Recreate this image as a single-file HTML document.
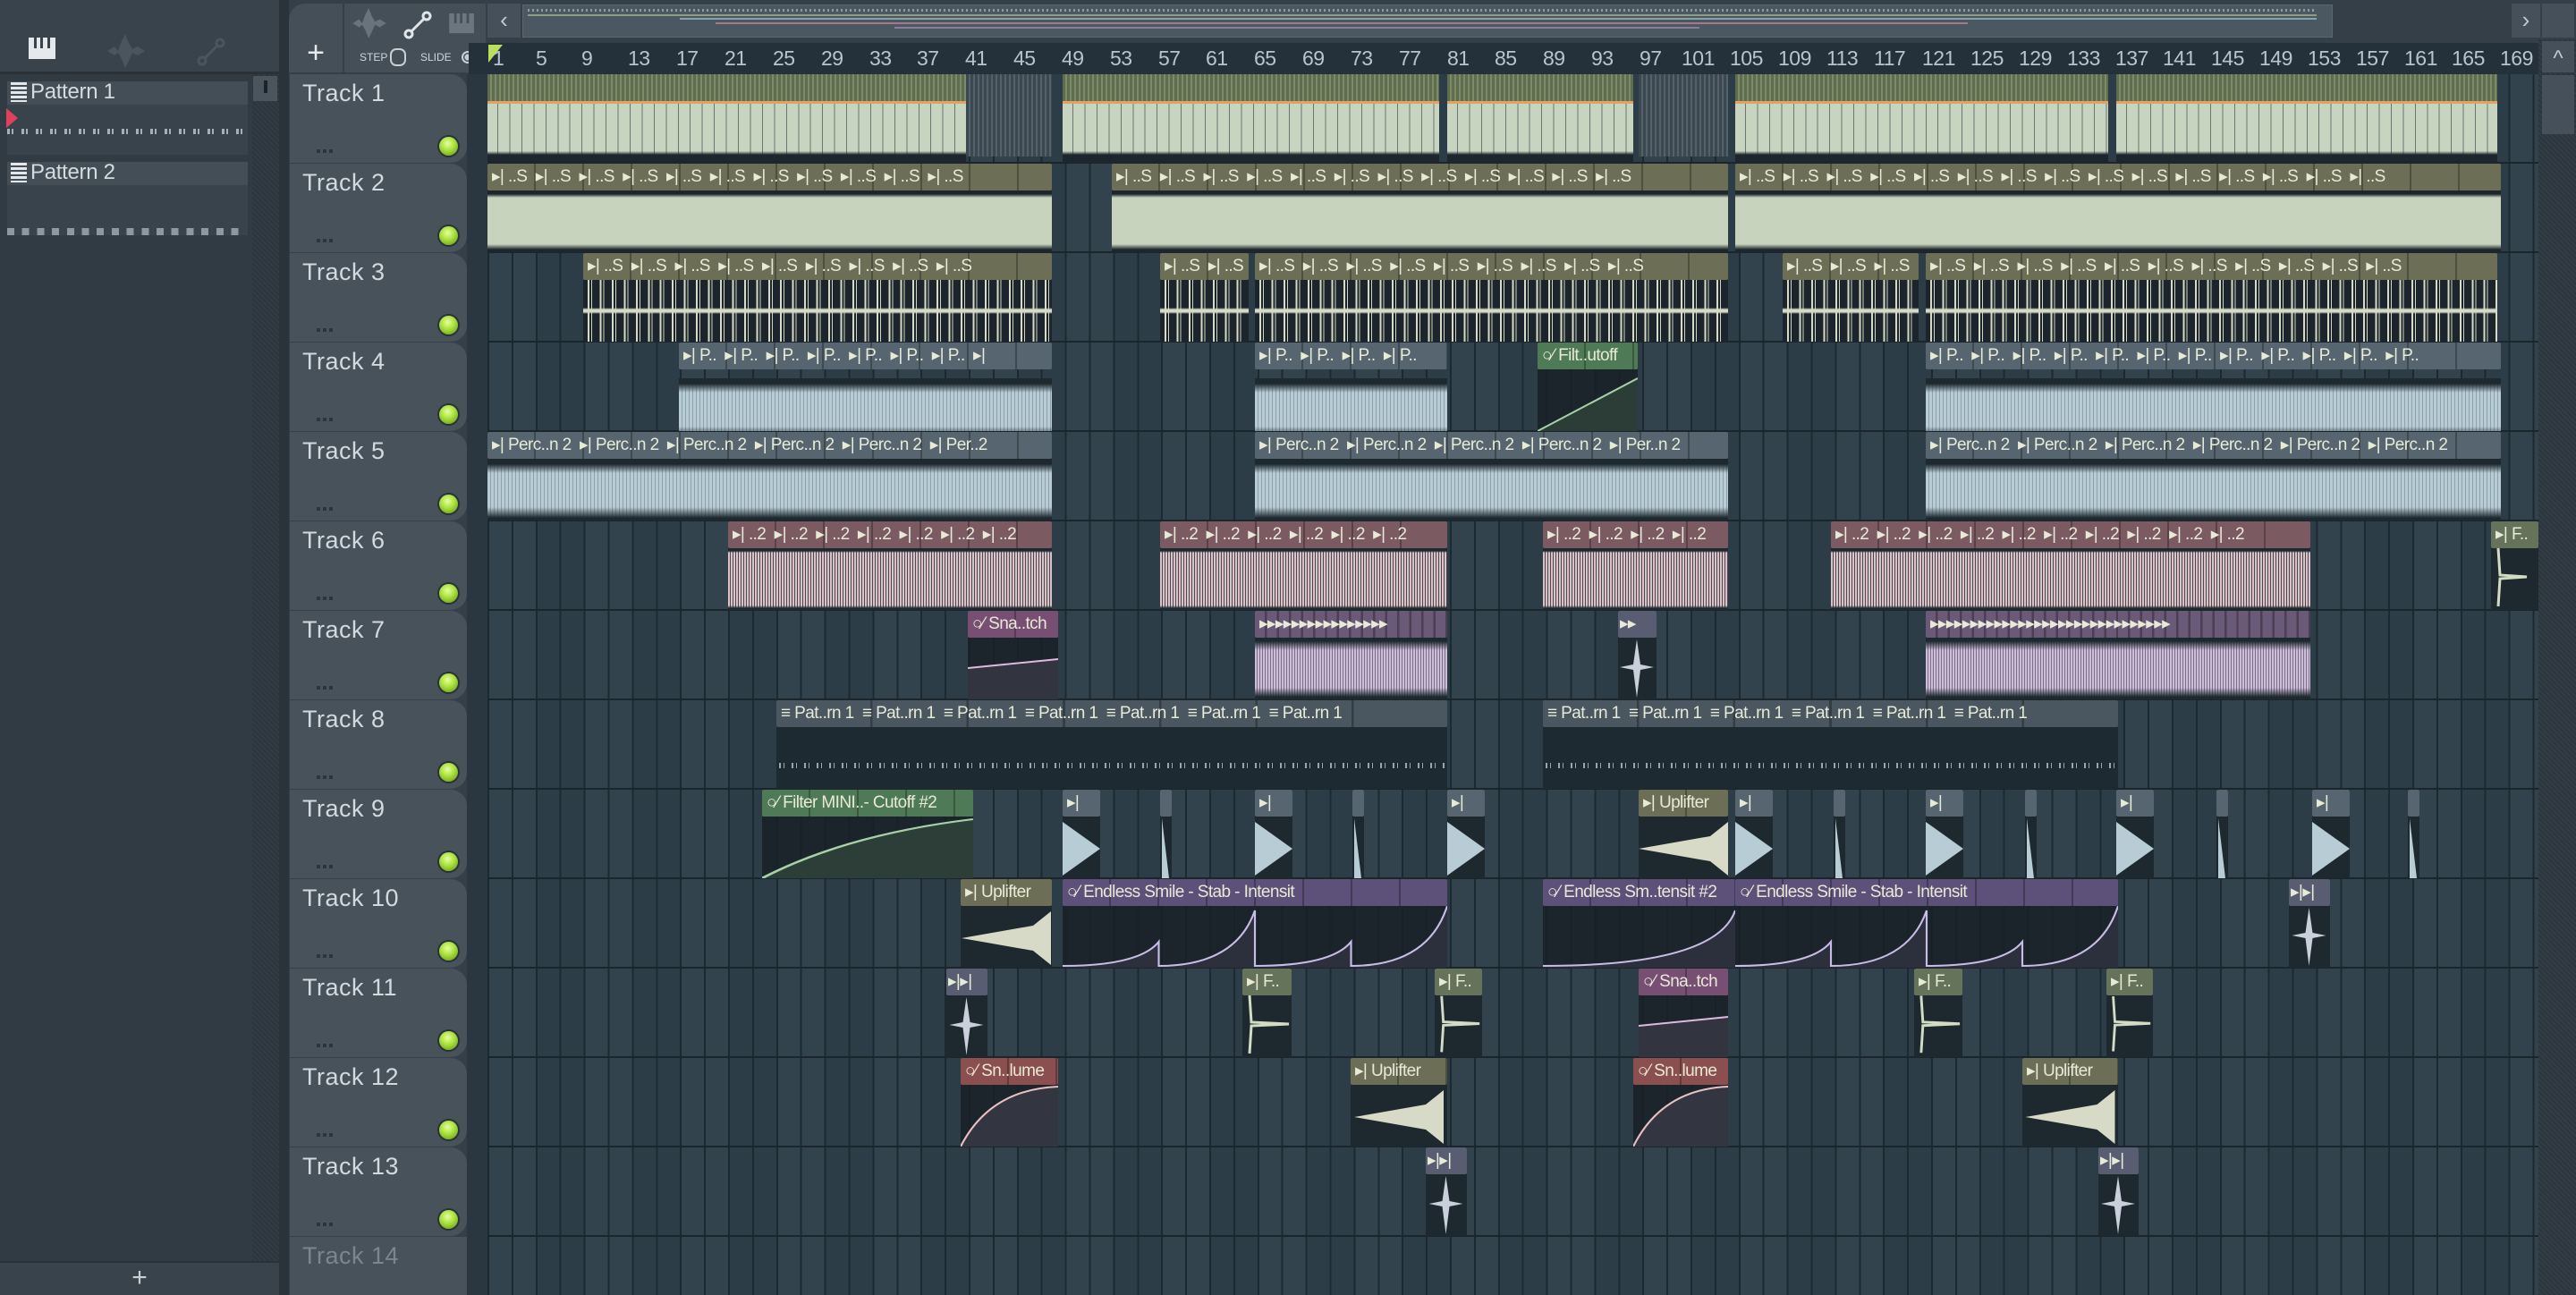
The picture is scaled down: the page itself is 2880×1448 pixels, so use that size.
<!DOCTYPE html>
<html><head><meta charset="utf-8"><style>
*{box-sizing:border-box;margin:0;padding:0}
body{width:2880px;height:1448px;overflow:hidden;background:#343f48;font-family:"Liberation Sans Narrow","Liberation Sans",sans-serif;position:relative}
.a{position:absolute}
#grid{left:545px;top:83px;width:2293px;height:1365px;
background:
repeating-linear-gradient(180deg,transparent 0 98px,#1b252c 98px 100px),
repeating-linear-gradient(90deg,#1d2930 0 2px,transparent 2px 26.9px),
repeating-linear-gradient(90deg,#33434e 0 53.8px,#2d3d48 53.8px 107.6px);}
.hd{position:absolute;left:324px;width:198px;height:99px;background:#47525b;border-radius:0 18px 18px 0;}
.hd b{position:absolute;left:14px;top:6px;font-weight:normal;font-size:27px;color:#d3dadf;letter-spacing:0.5px}
.hd i{position:absolute;left:167px;top:70px;width:21px;height:21px;border-radius:50%;background:radial-gradient(circle at 45% 35%,#e6ff9a 0,#a6e03a 45%,#5c8a1a 100%);box-shadow:0 0 0 2px #2a3236}
.hd u{position:absolute;left:30px;top:84px;width:20px;height:4px;text-decoration:none;background:repeating-linear-gradient(90deg,#2c353c 0 4px,transparent 4px 7px)}
.c{position:absolute;height:99px;overflow:hidden}
.c .h{height:30px;color:#e8ead8;font-size:19px;letter-spacing:-0.6px;line-height:30px;padding-left:5px;white-space:nowrap;overflow:hidden;border-radius:2px;
background-image:repeating-linear-gradient(90deg,transparent 0 52px,rgba(0,0,0,.28) 52px 54px)}
.c .bd{position:absolute;top:30px;left:0;right:0;bottom:0}
.o .h{background-color:#6c6f56}.s .h{background-color:#56656f}.g .h{background-color:#4f7a56}.p .h{background-color:#7b5b61}
.m .h{background-color:#774f72}.v .h{background-color:#5d5079}.u .h{background-color:#6a5a77}.r .h{background-color:#8a4f4e}
.t .h{background-color:#4a5760}.n .h{background-color:#595d72}
.wl{background:linear-gradient(180deg,#1c262c 0 4px,#c8d3bd 8px 60px,#1c262c 66px)}
.ws{background:linear-gradient(180deg,transparent 0 45%,#d6dac6 48% 52%,transparent 55%),repeating-linear-gradient(90deg,transparent 0 5px,#d6dac6 5px 7px,transparent 7px 9px,#cfd3bf 9px 10px,transparent 10px 13.45px),#1b252b}
.wn{background:linear-gradient(180deg,#1e292f 0 6px,rgba(30,41,47,0) 16px 54px,#1e292f 66px),repeating-linear-gradient(90deg,#b8ccd5 0 3px,#8ea2ac 3px 4px),#b8ccd5}
.wp{background:linear-gradient(180deg,#1e292f 0 3px,rgba(30,41,47,0) 5px 64px,#1e292f 67px),repeating-linear-gradient(90deg,#dcc2c7 0 2px,#4a4a52 2px 3px),#dcc2c7}
.wv{background:linear-gradient(180deg,#1e292f 0 4px,rgba(30,41,47,0) 14px 56px,#1e292f 66px),repeating-linear-gradient(90deg,#cdbdd8 0 2px,#7d708a 2px 3px),#cdbdd8}
.wa{background:rgba(24,32,38,.85)}
.wt{background:repeating-linear-gradient(90deg,transparent 0 3px,#9aa6ad 3px 5px,transparent 5px 8px,#9aa6ad 8px 9px,transparent 9px 14px) 0 40px/100% 6px no-repeat,#1e2a31}
.t1{position:absolute;left:0;right:0;top:0;height:99px;background:linear-gradient(180deg,transparent 0 30px,#e7a05e 30px 33px,#c6d4c0 33px 86px,#1c262c 90px),repeating-linear-gradient(90deg,#5e6c50 0 3px,#7d8c67 3px 5px);}
.t1:after{content:"";position:absolute;left:0;right:0;top:33px;height:57px;background:repeating-linear-gradient(90deg,transparent 0 11px,rgba(30,40,45,.55) 11px 12px,transparent 12px 13.45px)}
.dk{background:repeating-linear-gradient(90deg,#3c4850 0 3px,#55616a 3px 5px)}
svg{position:absolute;left:0;top:0;width:100%;height:100%}
.num{position:absolute;top:52px;font-size:23px;color:#b9c4cb;letter-spacing:-0.5px}
</style></head><body>

<div class="a" style="left:0;top:0;width:320px;height:83px;background:#39434c;border-bottom:3px solid #2a3238"></div>
<svg class="a" style="left:32px;top:42px;width:32px;height:26px" viewBox="0 0 32 26"><rect x="0" y="0" width="30" height="24" fill="#e6e9eb"/><rect x="6" y="0" width="3" height="12" fill="#39434c"/><rect x="13" y="0" width="3" height="12" fill="#39434c"/><rect x="21" y="0" width="3" height="12" fill="#39434c"/></svg>
<svg class="a" style="left:120px;top:38px;width:42px;height:38px" viewBox="0 0 42 38"><path d="M0 19 L8 14 L12 19 L16 8 L20 0 L24 10 L28 17 L34 14 L42 19 L34 24 L28 21 L24 30 L20 38 L16 28 L12 21 L8 24Z" fill="#4a555e"/></svg>
<svg class="a" style="left:220px;top:42px;width:32px;height:32px" viewBox="0 0 32 32"><circle cx="6" cy="26" r="4" fill="none" stroke="#4a555e" stroke-width="3"/><circle cx="26" cy="6" r="4" fill="none" stroke="#4a555e" stroke-width="3"/><line x1="9" y1="23" x2="23" y2="9" stroke="#4a555e" stroke-width="3"/></svg>
<div class="a" style="left:0;top:83px;width:282px;height:1327px;background:#313b44"></div>
<div class="a" style="left:8px;top:91px;width:269px;height:26px;background:#434e57"></div>
<div class="a" style="left:12px;top:92px;width:18px;height:22px;background:repeating-linear-gradient(180deg,#e4e8ea 0 3px,#434e57 3px 5px)"></div>
<div class="a" style="left:34px;top:89px;font-size:24px;color:#d5dce0;letter-spacing:-0.3px">Pattern 1</div>
<div class="a" style="left:8px;top:117px;width:269px;height:56px;background:#38434c"></div>
<div class="a" style="left:7px;top:121px;width:0;height:0;border-top:11px solid transparent;border-bottom:11px solid transparent;border-left:13px solid #e0405a"></div>
<div class="a" style="left:8px;top:144px;width:269px;height:6px;background:repeating-linear-gradient(90deg,#a7b0b6 0 3px,transparent 3px 5px,#a7b0b6 5px 7px,transparent 7px 16px)"></div>
<div class="a" style="left:8px;top:181px;width:269px;height:26px;background:#434e57"></div>
<div class="a" style="left:12px;top:182px;width:18px;height:22px;background:repeating-linear-gradient(180deg,#e4e8ea 0 3px,#434e57 3px 5px)"></div>
<div class="a" style="left:34px;top:179px;font-size:24px;color:#d5dce0;letter-spacing:-0.3px">Pattern 2</div>
<div class="a" style="left:8px;top:207px;width:269px;height:56px;background:#38434c"></div>
<div class="a" style="left:8px;top:255px;width:262px;height:8px;background:repeating-linear-gradient(90deg,#8e989f 0 8px,transparent 8px 16.7px)"></div>
<div class="a" style="left:282px;top:83px;width:30px;height:1327px;background:repeating-linear-gradient(45deg,#2c353d 0 2px,#323c44 2px 4px)"></div>
<div class="a" style="left:283px;top:85px;width:27px;height:28px;background:#4a555e"></div>
<div class="a" style="left:295px;top:90px;width:4px;height:14px;background:#1c2328"></div>
<div class="a" style="left:312px;top:0;width:11px;height:1448px;background:#2a3339"></div>
<div class="a" style="left:0;top:1410px;width:312px;height:38px;background:#39434c;border-top:2px solid #2a3238;color:#c9d0d4;font-size:30px;text-align:center;line-height:34px">+</div>

<div class="a" style="left:323px;top:0;width:2557px;height:48px;background:#353f48"></div>
<div class="a" style="left:323px;top:4px;width:60px;height:77px;background:#454f58;border-radius:18px 0 0 0;color:#e6eaec;font-size:34px;text-align:center;line-height:110px">+</div>
<div class="a" style="left:385px;top:4px;width:158px;height:77px;background:#454f58"></div>
<svg class="a" style="left:393px;top:9px;width:40px;height:34px" viewBox="0 0 42 38"><path d="M0 19 L8 14 L12 19 L16 8 L20 0 L24 10 L28 17 L34 14 L42 19 L34 24 L28 21 L24 30 L20 38 L16 28 L12 21 L8 24Z" fill="#68737b"/></svg>
<svg class="a" style="left:451px;top:12px;width:32px;height:32px" viewBox="0 0 32 32"><circle cx="6" cy="26" r="4" fill="none" stroke="#e0e5e8" stroke-width="3"/><circle cx="26" cy="6" r="4" fill="none" stroke="#e0e5e8" stroke-width="3"/><line x1="9" y1="23" x2="23" y2="9" stroke="#e0e5e8" stroke-width="3"/></svg>
<svg class="a" style="left:502px;top:15px;width:30px;height:24px" viewBox="0 0 32 26"><rect x="0" y="0" width="30" height="24" fill="#6b767e"/><rect x="6" y="0" width="3" height="12" fill="#454f58"/><rect x="13" y="0" width="3" height="12" fill="#454f58"/><rect x="21" y="0" width="3" height="12" fill="#454f58"/></svg>
<div class="a" style="left:402px;top:57px;font-size:12px;color:#d0d6da">STEP</div>
<div class="a" style="left:436px;top:54px;width:18px;height:20px;border:2px solid #c8ced2;border-radius:7px"></div>
<div class="a" style="left:470px;top:57px;font-size:12px;color:#d0d6da">SLIDE</div>
<div class="a" style="left:516px;top:57px;width:14px;height:14px;border:2px solid #c8ced2;border-radius:50%;background:radial-gradient(circle,#c8ced2 0 3px,transparent 4px)"></div>
<div class="a" style="left:545px;top:4px;width:37px;height:38px;background:#46505a;color:#c3cace;font-size:26px;text-align:center;line-height:36px">&#8249;</div>
<div class="a" style="left:584px;top:5px;width:2024px;height:37px;background:#4b5861;border:1px solid #5a666f"></div>
<div class="a" style="left:590px;top:10px;width:2000px;height:3px;background:repeating-linear-gradient(90deg,#8f9aa0 0 2px,transparent 2px 5px)"></div>
<div class="a" style="left:590px;top:16px;width:2000px;height:2px;background:#8d9c82"></div>
<div class="a" style="left:760px;top:20px;width:1830px;height:2px;background:#89a3ad"></div>
<div class="a" style="left:800px;top:25px;width:1400px;height:2px;background:#a57a86"></div>
<div class="a" style="left:1000px;top:30px;width:900px;height:2px;background:#8a7aa0"></div>
<div class="a" style="left:2808px;top:4px;width:32px;height:38px;background:#46505a;color:#c3cace;font-size:26px;text-align:center;line-height:36px">&#8250;</div>
<div class="a" style="left:2842px;top:4px;width:36px;height:38px;background:#46505a"></div>

<div class="a" style="left:524px;top:48px;width:2314px;height:35px;background:#24313a"></div>
<div class="a" style="left:546px;top:50px;width:0;height:0;border-left:16px solid #b8e05a;border-bottom:20px solid transparent"></div>
<div class="num" style="left:551px">1</div><div class="num" style="left:599px">5</div><div class="num" style="left:650px">9</div><div class="num" style="left:702px">13</div><div class="num" style="left:756px">17</div><div class="num" style="left:810px">21</div><div class="num" style="left:864px">25</div><div class="num" style="left:918px">29</div><div class="num" style="left:972px">33</div><div class="num" style="left:1025px">37</div><div class="num" style="left:1079px">41</div><div class="num" style="left:1133px">45</div><div class="num" style="left:1187px">49</div><div class="num" style="left:1241px">53</div><div class="num" style="left:1295px">57</div><div class="num" style="left:1348px">61</div><div class="num" style="left:1402px">65</div><div class="num" style="left:1456px">69</div><div class="num" style="left:1510px">73</div><div class="num" style="left:1564px">77</div><div class="num" style="left:1618px">81</div><div class="num" style="left:1671px">85</div><div class="num" style="left:1725px">89</div><div class="num" style="left:1779px">93</div><div class="num" style="left:1833px">97</div><div class="num" style="left:1880px">101</div><div class="num" style="left:1934px">105</div><div class="num" style="left:1988px">109</div><div class="num" style="left:2042px">113</div><div class="num" style="left:2095px">117</div><div class="num" style="left:2149px">121</div><div class="num" style="left:2203px">125</div><div class="num" style="left:2257px">129</div><div class="num" style="left:2311px">133</div><div class="num" style="left:2365px">137</div><div class="num" style="left:2418px">141</div><div class="num" style="left:2472px">145</div><div class="num" style="left:2526px">149</div><div class="num" style="left:2580px">153</div><div class="num" style="left:2634px">157</div><div class="num" style="left:2688px">161</div><div class="num" style="left:2741px">165</div><div class="num" style="left:2795px">169</div>

<div class="a" style="left:2838px;top:44px;width:42px;height:1404px;background:repeating-linear-gradient(45deg,#2c353d 0 2px,#333d45 2px 4px)"></div>
<div class="a" style="left:2842px;top:46px;width:36px;height:35px;background:#46505a;color:#c3cace;font-size:24px;text-align:center;line-height:40px">^</div>
<div class="a" style="left:2842px;top:84px;width:36px;height:66px;background:#46505a"></div>

<div class="a" style="left:522px;top:83px;width:23px;height:1365px;background:#2a3640"></div>
<div class="a" id="grid"></div>

<div class="hd" style="top:83px"><b>Track 1</b><u></u><i></i></div>
<div class="hd" style="top:183px"><b>Track 2</b><u></u><i></i></div>
<div class="hd" style="top:283px"><b>Track 3</b><u></u><i></i></div>
<div class="hd" style="top:383px"><b>Track 4</b><u></u><i></i></div>
<div class="hd" style="top:483px"><b>Track 5</b><u></u><i></i></div>
<div class="hd" style="top:583px"><b>Track 6</b><u></u><i></i></div>
<div class="hd" style="top:683px"><b>Track 7</b><u></u><i></i></div>
<div class="hd" style="top:783px"><b>Track 8</b><u></u><i></i></div>
<div class="hd" style="top:883px"><b>Track 9</b><u></u><i></i></div>
<div class="hd" style="top:983px"><b>Track 10</b><u></u><i></i></div>
<div class="hd" style="top:1083px"><b>Track 11</b><u></u><i></i></div>
<div class="hd" style="top:1183px"><b>Track 12</b><u></u><i></i></div>
<div class="hd" style="top:1283px"><b>Track 13</b><u></u><i></i></div>
<div class="hd" style="top:1383px;height:65px;border-radius:0"><b style="color:#7b868d">Track 14</b></div>

<div class="c" style="top:83px;left:545px;width:535px"><div class="t1"></div></div>
<div class="c" style="top:83px;left:1080px;width:96px"><div class="dk" style="height:92px"></div></div>
<div class="c" style="top:83px;left:1188px;width:421px"><div class="t1"></div></div>
<div class="c" style="top:83px;left:1618px;width:208px"><div class="t1"></div></div>
<div class="c" style="top:83px;left:1832px;width:100px"><div class="dk" style="height:92px"></div></div>
<div class="c" style="top:83px;left:1940px;width:417px"><div class="t1"></div></div>
<div class="c" style="top:83px;left:2366px;width:426px"><div class="t1"></div></div>

<div class="c o" style="top:183px;left:545px;width:631px"><div class="h">&#9656;| ..S &nbsp;&#9656;| ..S &nbsp;&#9656;| ..S &nbsp;&#9656;| ..S &nbsp;&#9656;| ..S &nbsp;&#9656;| ..S &nbsp;&#9656;| ..S &nbsp;&#9656;| ..S &nbsp;&#9656;| ..S &nbsp;&#9656;| ..S &nbsp;&#9656;| ..S</div><div class="bd wl"></div></div>
<div class="c o" style="top:183px;left:1243px;width:689px"><div class="h">&#9656;| ..S &nbsp;&#9656;| ..S &nbsp;&#9656;| ..S &nbsp;&#9656;| ..S &nbsp;&#9656;| ..S &nbsp;&#9656;| ..S &nbsp;&#9656;| ..S &nbsp;&#9656;| ..S &nbsp;&#9656;| ..S &nbsp;&#9656;| ..S &nbsp;&#9656;| ..S &nbsp;&#9656;| ..S</div><div class="bd wl"></div></div>
<div class="c o" style="top:183px;left:1940px;width:856px"><div class="h">&#9656;| ..S &nbsp;&#9656;| ..S &nbsp;&#9656;| ..S &nbsp;&#9656;| ..S &nbsp;&#9656;| ..S &nbsp;&#9656;| ..S &nbsp;&#9656;| ..S &nbsp;&#9656;| ..S &nbsp;&#9656;| ..S &nbsp;&#9656;| ..S &nbsp;&#9656;| ..S &nbsp;&#9656;| ..S &nbsp;&#9656;| ..S &nbsp;&#9656;| ..S &nbsp;&#9656;| ..S</div><div class="bd wl"></div></div>

<div class="c o" style="top:283px;left:652px;width:524px"><div class="h">&#9656;| ..S &nbsp;&#9656;| ..S &nbsp;&#9656;| ..S &nbsp;&#9656;| ..S &nbsp;&#9656;| ..S &nbsp;&#9656;| ..S &nbsp;&#9656;| ..S &nbsp;&#9656;| ..S &nbsp;&#9656;| ..S</div><div class="bd ws"></div></div>
<div class="c o" style="top:283px;left:1297px;width:99px"><div class="h">&#9656;| ..S &nbsp;&#9656;| ..S</div><div class="bd ws"></div></div>
<div class="c o" style="top:283px;left:1403px;width:529px"><div class="h">&#9656;| ..S &nbsp;&#9656;| ..S &nbsp;&#9656;| ..S &nbsp;&#9656;| ..S &nbsp;&#9656;| ..S &nbsp;&#9656;| ..S &nbsp;&#9656;| ..S &nbsp;&#9656;| ..S &nbsp;&#9656;| ..S</div><div class="bd ws"></div></div>
<div class="c o" style="top:283px;left:1993px;width:152px"><div class="h">&#9656;| ..S &nbsp;&#9656;| ..S &nbsp;&#9656;| ..S</div><div class="bd ws"></div></div>
<div class="c o" style="top:283px;left:2153px;width:639px"><div class="h">&#9656;| ..S &nbsp;&#9656;| ..S &nbsp;&#9656;| ..S &nbsp;&#9656;| ..S &nbsp;&#9656;| ..S &nbsp;&#9656;| ..S &nbsp;&#9656;| ..S &nbsp;&#9656;| ..S &nbsp;&#9656;| ..S &nbsp;&#9656;| ..S &nbsp;&#9656;| ..S</div><div class="bd ws"></div></div>

<div class="c s" style="top:383px;left:759px;width:417px"><div class="h">&#9656;| P.. &nbsp;&#9656;| P.. &nbsp;&#9656;| P.. &nbsp;&#9656;| P.. &nbsp;&#9656;| P.. &nbsp;&#9656;| P.. &nbsp;&#9656;| P.. &nbsp;&#9656;|</div><div class="bd wn" style="top:40px"></div></div>
<div class="c s" style="top:383px;left:1403px;width:215px"><div class="h">&#9656;| P.. &nbsp;&#9656;| P.. &nbsp;&#9656;| P.. &nbsp;&#9656;| P..</div><div class="bd wn" style="top:40px"></div></div>
<div class="c g" style="top:383px;left:1719px;width:112px"><div class="h">&#9675;&#8260; Filt..utoff</div><div class="bd wa"><svg viewBox="0 0 100 69" preserveAspectRatio="none"><path d="M0 69 L100 10 L100 69Z" fill="#2c3c36"/><path d="M0 69 L100 10" stroke="#a8d0a8" stroke-width="2" fill="none"/></svg></div></div>
<div class="c s" style="top:383px;left:2153px;width:643px"><div class="h">&#9656;| P.. &nbsp;&#9656;| P.. &nbsp;&#9656;| P.. &nbsp;&#9656;| P.. &nbsp;&#9656;| P.. &nbsp;&#9656;| P.. &nbsp;&#9656;| P.. &nbsp;&#9656;| P.. &nbsp;&#9656;| P.. &nbsp;&#9656;| P.. &nbsp;&#9656;| P.. &nbsp;&#9656;| P..</div><div class="bd wn" style="top:40px"></div></div>

<div class="c s" style="top:483px;left:545px;width:631px"><div class="h">&#9656;| Perc..n 2 &nbsp;&#9656;| Perc..n 2 &nbsp;&#9656;| Perc..n 2 &nbsp;&#9656;| Perc..n 2 &nbsp;&#9656;| Perc..n 2 &nbsp;&#9656;| Per..2</div><div class="bd wn"></div></div>
<div class="c s" style="top:483px;left:1403px;width:529px"><div class="h">&#9656;| Perc..n 2 &nbsp;&#9656;| Perc..n 2 &nbsp;&#9656;| Perc..n 2 &nbsp;&#9656;| Perc..n 2 &nbsp;&#9656;| Per..n 2</div><div class="bd wn"></div></div>
<div class="c s" style="top:483px;left:2153px;width:643px"><div class="h">&#9656;| Perc..n 2 &nbsp;&#9656;| Perc..n 2 &nbsp;&#9656;| Perc..n 2 &nbsp;&#9656;| Perc..n 2 &nbsp;&#9656;| Perc..n 2 &nbsp;&#9656;| Perc..n 2</div><div class="bd wn"></div></div>

<div class="c p" style="top:583px;left:814px;width:362px"><div class="h">&#9656;| ..2 &nbsp;&#9656;| ..2 &nbsp;&#9656;| ..2 &nbsp;&#9656;| ..2 &nbsp;&#9656;| ..2 &nbsp;&#9656;| ..2 &nbsp;&#9656;| ..2</div><div class="bd wp"></div></div>
<div class="c p" style="top:583px;left:1297px;width:321px"><div class="h">&#9656;| ..2 &nbsp;&#9656;| ..2 &nbsp;&#9656;| ..2 &nbsp;&#9656;| ..2 &nbsp;&#9656;| ..2 &nbsp;&#9656;| ..2</div><div class="bd wp"></div></div>
<div class="c p" style="top:583px;left:1725px;width:207px"><div class="h">&#9656;| ..2 &nbsp;&#9656;| ..2 &nbsp;&#9656;| ..2 &nbsp;&#9656;| ..2</div><div class="bd wp"></div></div>
<div class="c p" style="top:583px;left:2047px;width:536px"><div class="h">&#9656;| ..2 &nbsp;&#9656;| ..2 &nbsp;&#9656;| ..2 &nbsp;&#9656;| ..2 &nbsp;&#9656;| ..2 &nbsp;&#9656;| ..2 &nbsp;&#9656;| ..2 &nbsp;&#9656;| ..2 &nbsp;&#9656;| ..2 &nbsp;&#9656;| ..2</div><div class="bd wp"></div></div>
<div class="c" style="top:583px;left:2785px;width:53px;background:#1e292f"><div class="h" style="background:#65735a">&#9656;| F..</div><svg viewBox="0 0 53 99"><path d="M8 30 L10 60 L40 62 L10 64 L8 95" stroke="#d2dcc4" stroke-width="3" fill="none"/></svg></div>

<div class="c m" style="top:683px;left:1082px;width:101px"><div class="h">&#9675;&#8260; Sna..tch</div><div class="bd wa"><svg viewBox="0 0 100 69" preserveAspectRatio="none"><path d="M0 34 L100 24 L100 69 L0 69Z" fill="#323440"/><path d="M0 34 L100 24" stroke="#e0b8e0" stroke-width="2" fill="none"/></svg></div></div>
<div class="c u" style="top:683px;left:1403px;width:215px"><div class="h" style="background-image:repeating-linear-gradient(90deg,transparent 0 11px,rgba(0,0,0,.3) 11px 13.45px)">&#9656;&#9656;&#9656;&#9656;&#9656;&#9656;&#9656;&#9656;&#9656;&#9656;&#9656;&#9656;&#9656;&#9656;&#9656;&#9656;</div><div class="bd wv"></div></div>
<div class="c n" style="top:683px;left:1809px;width:43px;background:#1e292f"><div class="h" style="padding-left:2px">&#9656;&#9656;</div><svg viewBox="0 0 43 99"><path d="M21 32 L25 60 L40 63 L25 66 L21 97 L17 66 L2 63 L17 60Z" fill="#c9d0dc"/></svg></div>
<div class="c u" style="top:683px;left:2153px;width:430px"><div class="h" style="background-image:repeating-linear-gradient(90deg,transparent 0 11px,rgba(0,0,0,.3) 11px 13.45px)">&#9656;&#9656;&#9656;&#9656;&#9656;&#9656;&#9656;&#9656;&#9656;&#9656;&#9656;&#9656;&#9656;&#9656;&#9656;&#9656;&#9656;&#9656;&#9656;&#9656;&#9656;&#9656;&#9656;&#9656;&#9656;&#9656;&#9656;&#9656;&#9656;&#9656;</div><div class="bd wv"></div></div>

<div class="c t" style="top:783px;left:868px;width:750px"><div class="h" style="background-image:repeating-linear-gradient(90deg,transparent 0 105px,rgba(0,0,0,.3) 105px 107.6px)">&#8801; Pat..rn 1 &nbsp;&#8801; Pat..rn 1 &nbsp;&#8801; Pat..rn 1 &nbsp;&#8801; Pat..rn 1 &nbsp;&#8801; Pat..rn 1 &nbsp;&#8801; Pat..rn 1 &nbsp;&#8801; Pat..rn 1</div><div class="bd wt"></div></div>
<div class="c t" style="top:783px;left:1725px;width:643px"><div class="h" style="background-image:repeating-linear-gradient(90deg,transparent 0 105px,rgba(0,0,0,.3) 105px 107.6px)">&#8801; Pat..rn 1 &nbsp;&#8801; Pat..rn 1 &nbsp;&#8801; Pat..rn 1 &nbsp;&#8801; Pat..rn 1 &nbsp;&#8801; Pat..rn 1 &nbsp;&#8801; Pat..rn 1</div><div class="bd wt"></div></div>

<div class="c g" style="top:883px;left:852px;width:236px"><div class="h">&#9675;&#8260; Filter MINI..- Cutoff #2</div><div class="bd wa"><svg viewBox="0 0 100 69" preserveAspectRatio="none"><path d="M0 69 Q40 20 100 3 L100 69Z" fill="#2d3d38"/><path d="M0 69 Q40 20 100 3" stroke="#a8d0a8" stroke-width="2" fill="none"/></svg></div></div>
<div class="c s" style="top:883px;left:1188px;width:42px;background:#1e292f"><div class="h">&#9656;|</div><svg viewBox="0 0 42 99"><path d="M0 36 L42 66 L0 96Z" fill="#b8ccd5"/></svg></div>
<div class="c s" style="top:883px;left:1297px;width:13px;background:#1e292f"><div class="h"></div><svg viewBox="0 0 13 99"><path d="M2 32 L10 99 L2 99Z" fill="#b8ccd5"/></svg></div>
<div class="c s" style="top:883px;left:1403px;width:42px;background:#1e292f"><div class="h">&#9656;|</div><svg viewBox="0 0 42 99"><path d="M0 36 L42 66 L0 96Z" fill="#b8ccd5"/></svg></div>
<div class="c s" style="top:883px;left:1512px;width:13px;background:#1e292f"><div class="h"></div><svg viewBox="0 0 13 99"><path d="M2 32 L10 99 L2 99Z" fill="#b8ccd5"/></svg></div>
<div class="c s" style="top:883px;left:1618px;width:42px;background:#1e292f"><div class="h">&#9656;|</div><svg viewBox="0 0 42 99"><path d="M0 36 L42 66 L0 96Z" fill="#b8ccd5"/></svg></div>
<div class="c o" style="top:883px;left:1832px;width:100px;background:#1e292f"><div class="h">&#9656;| Uplifter</div><svg viewBox="0 0 100 99"><path d="M0 66 L80 52 L100 36 L100 96 L80 80Z" fill="#d6dac6"/></svg></div>
<div class="c s" style="top:883px;left:1940px;width:42px;background:#1e292f"><div class="h">&#9656;|</div><svg viewBox="0 0 42 99"><path d="M0 36 L42 66 L0 96Z" fill="#b8ccd5"/></svg></div>
<div class="c s" style="top:883px;left:2050px;width:13px;background:#1e292f"><div class="h"></div><svg viewBox="0 0 13 99"><path d="M2 32 L10 99 L2 99Z" fill="#b8ccd5"/></svg></div>
<div class="c s" style="top:883px;left:2153px;width:42px;background:#1e292f"><div class="h">&#9656;|</div><svg viewBox="0 0 42 99"><path d="M0 36 L42 66 L0 96Z" fill="#b8ccd5"/></svg></div>
<div class="c s" style="top:883px;left:2264px;width:13px;background:#1e292f"><div class="h"></div><svg viewBox="0 0 13 99"><path d="M2 32 L10 99 L2 99Z" fill="#b8ccd5"/></svg></div>
<div class="c s" style="top:883px;left:2366px;width:42px;background:#1e292f"><div class="h">&#9656;|</div><svg viewBox="0 0 42 99"><path d="M0 36 L42 66 L0 96Z" fill="#b8ccd5"/></svg></div>
<div class="c s" style="top:883px;left:2478px;width:13px;background:#1e292f"><div class="h"></div><svg viewBox="0 0 13 99"><path d="M2 32 L10 99 L2 99Z" fill="#b8ccd5"/></svg></div>
<div class="c s" style="top:883px;left:2585px;width:42px;background:#1e292f"><div class="h">&#9656;|</div><svg viewBox="0 0 42 99"><path d="M0 36 L42 66 L0 96Z" fill="#b8ccd5"/></svg></div>
<div class="c s" style="top:883px;left:2692px;width:13px;background:#1e292f"><div class="h"></div><svg viewBox="0 0 13 99"><path d="M2 32 L10 99 L2 99Z" fill="#b8ccd5"/></svg></div>

<div class="c o" style="top:983px;left:1074px;width:102px;background:#1e292f"><div class="h">&#9656;| Uplifter</div><svg viewBox="0 0 100 99"><path d="M0 66 L80 52 L100 36 L100 96 L80 80Z" fill="#d6dac6"/></svg></div>
<div class="c v" style="top:983px;left:1188px;width:430px"><div class="h">&#9675;&#8260; Endless Smile - Stab - Intensit</div><div class="bd wa"><svg viewBox="0 0 400 69" preserveAspectRatio="none"><path d="M0 67 Q80 67 100 40 L100 67 Q180 67 200 5 L200 67 Q280 67 300 40 L300 67 Q380 67 400 0 L400 69 L0 69Z" fill="#2c303c"/><path d="M0 67 Q80 67 100 40 L100 67 Q180 67 200 5 L200 67 Q280 67 300 40 L300 67 Q380 67 400 0" stroke="#c8bce6" stroke-width="2" fill="none"/></svg></div></div>
<div class="c v" style="top:983px;left:1725px;width:215px"><div class="h">&#9675;&#8260; Endless Sm..tensit #2</div><div class="bd wa"><svg viewBox="0 0 200 69" preserveAspectRatio="none"><path d="M0 67 Q180 67 200 5 L200 69 L0 69Z" fill="#2c303c"/><path d="M0 67 Q180 67 200 5" stroke="#c8bce6" stroke-width="2" fill="none"/></svg></div></div>
<div class="c v" style="top:983px;left:1940px;width:428px"><div class="h">&#9675;&#8260; Endless Smile - Stab - Intensit</div><div class="bd wa"><svg viewBox="0 0 400 69" preserveAspectRatio="none"><path d="M0 67 Q80 67 100 40 L100 67 Q180 67 200 5 L200 67 Q280 67 300 40 L300 67 Q380 67 400 0 L400 69 L0 69Z" fill="#2c303c"/><path d="M0 67 Q80 67 100 40 L100 67 Q180 67 200 5 L200 67 Q280 67 300 40 L300 67 Q380 67 400 0" stroke="#c8bce6" stroke-width="2" fill="none"/></svg></div></div>
<div class="c n" style="top:983px;left:2559px;width:46px;background:#1e292f"><div class="h" style="padding-left:2px">&#9656;|&#9656;|</div><svg viewBox="0 0 43 99"><path d="M21 32 L25 60 L40 63 L25 66 L21 97 L17 66 L2 63 L17 60Z" fill="#c9d0dc"/></svg></div>

<div class="c n" style="top:1083px;left:1058px;width:46px;background:#1e292f"><div class="h" style="padding-left:2px">&#9656;|&#9656;|</div><svg viewBox="0 0 43 99"><path d="M21 32 L25 60 L40 63 L25 66 L21 97 L17 66 L2 63 L17 60Z" fill="#c9d0dc"/></svg></div>
<div class="c" style="top:1083px;left:1389px;width:55px;background:#1e292f"><div class="h" style="background:#65735a">&#9656;| F..</div><svg viewBox="0 0 55 99"><path d="M8 30 L10 60 L52 62 L10 64 L8 95" stroke="#d2dcc4" stroke-width="3" fill="none"/></svg></div>
<div class="c" style="top:1083px;left:1604px;width:53px;background:#1e292f"><div class="h" style="background:#65735a">&#9656;| F..</div><svg viewBox="0 0 55 99"><path d="M8 30 L10 60 L52 62 L10 64 L8 95" stroke="#d2dcc4" stroke-width="3" fill="none"/></svg></div>
<div class="c m" style="top:1083px;left:1832px;width:100px"><div class="h">&#9675;&#8260; Sna..tch</div><div class="bd wa"><svg viewBox="0 0 100 69" preserveAspectRatio="none"><path d="M0 34 L100 24 L100 69 L0 69Z" fill="#323440"/><path d="M0 34 L100 24" stroke="#e0b8e0" stroke-width="2" fill="none"/></svg></div></div>
<div class="c" style="top:1083px;left:2140px;width:54px;background:#1e292f"><div class="h" style="background:#65735a">&#9656;| F..</div><svg viewBox="0 0 55 99"><path d="M8 30 L10 60 L52 62 L10 64 L8 95" stroke="#d2dcc4" stroke-width="3" fill="none"/></svg></div>
<div class="c" style="top:1083px;left:2355px;width:52px;background:#1e292f"><div class="h" style="background:#65735a">&#9656;| F..</div><svg viewBox="0 0 55 99"><path d="M8 30 L10 60 L52 62 L10 64 L8 95" stroke="#d2dcc4" stroke-width="3" fill="none"/></svg></div>

<div class="c r" style="top:1183px;left:1074px;width:109px"><div class="h">&#9675;&#8260; Sn..lume</div><div class="bd wa"><svg viewBox="0 0 100 69" preserveAspectRatio="none"><path d="M0 69 Q30 5 100 2 L100 69Z" fill="#333640"/><path d="M0 69 Q30 5 100 2" stroke="#e8c0c0" stroke-width="2" fill="none"/></svg></div></div>
<div class="c o" style="top:1183px;left:1510px;width:108px;background:#1e292f"><div class="h">&#9656;| Uplifter</div><svg viewBox="0 0 100 99"><path d="M0 66 L80 52 L100 36 L100 96 L80 80Z" fill="#d6dac6"/></svg></div>
<div class="c r" style="top:1183px;left:1826px;width:106px"><div class="h">&#9675;&#8260; Sn..lume</div><div class="bd wa"><svg viewBox="0 0 100 69" preserveAspectRatio="none"><path d="M0 69 Q30 5 100 2 L100 69Z" fill="#333640"/><path d="M0 69 Q30 5 100 2" stroke="#e8c0c0" stroke-width="2" fill="none"/></svg></div></div>
<div class="c o" style="top:1183px;left:2261px;width:107px;background:#1e292f"><div class="h">&#9656;| Uplifter</div><svg viewBox="0 0 100 99"><path d="M0 66 L80 52 L100 36 L100 96 L80 80Z" fill="#d6dac6"/></svg></div>

<div class="c n" style="top:1283px;left:1594px;width:46px;background:#1e292f"><div class="h" style="padding-left:2px">&#9656;|&#9656;|</div><svg viewBox="0 0 43 99"><path d="M21 32 L25 60 L40 63 L25 66 L21 97 L17 66 L2 63 L17 60Z" fill="#c9d0dc"/></svg></div>
<div class="c n" style="top:1283px;left:2346px;width:45px;background:#1e292f"><div class="h" style="padding-left:2px">&#9656;|&#9656;|</div><svg viewBox="0 0 43 99"><path d="M21 32 L25 60 L40 63 L25 66 L21 97 L17 66 L2 63 L17 60Z" fill="#c9d0dc"/></svg></div>

</body></html>
